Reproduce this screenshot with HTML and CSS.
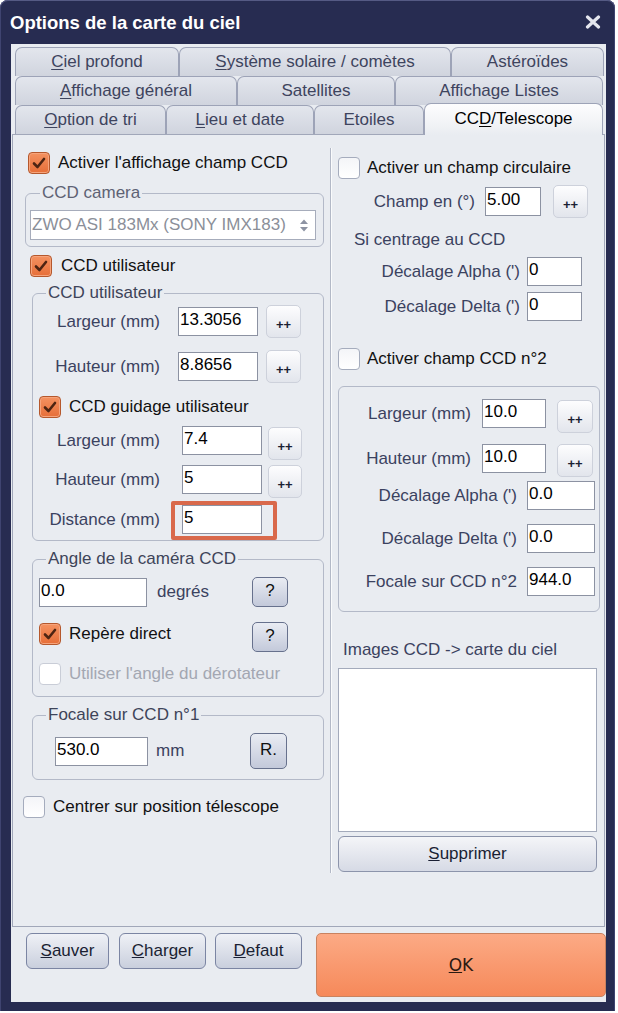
FILE: index.html
```html
<!DOCTYPE html>
<html lang="fr">
<head>
<meta charset="utf-8">
<title>Options de la carte du ciel</title>
<link rel="stylesheet" href="styles.css">
</head>
<body>
<div class="window">
  <div class="titlebar">
    <span class="title">Options de la carte du ciel</span>
    <svg class="close" width="16" height="14" viewBox="0 0 16 14"><path d="M2.5 2 L13.5 12 M13.5 2 L2.5 12"/></svg>
  </div>
  <div class="client">
    <div class="tabs">
      <div class="tabrow">
        <div class="tab t-ciel"><u>C</u>iel profond</div>
        <div class="tab t-sys"><u>S</u>ystème solaire / comètes</div>
        <div class="tab t-ast">Astéroïdes</div>
      </div>
      <div class="tabrow">
        <div class="tab t-aff"><u>A</u>ffichage général</div>
        <div class="tab t-sat">Satellites</div>
        <div class="tab t-list">Affichage Listes</div>
      </div>
      <div class="tabrow">
        <div class="tab t-tri"><u>O</u>ption de tri</div>
        <div class="tab t-lieu"><u>L</u>ieu et date</div>
        <div class="tab t-eto">Etoiles</div>
        <div class="tab t-ccd active">CC<u>D</u>/Telescope</div>
      </div>
    </div>

    <div class="panel">
      <div class="col-left">
        <div class="check-row cb-main">
          <span class="cb on"><svg viewBox="0 0 22 22" width="22" height="22"><path d="M6 11.5 L9.5 15 L16 7"/></svg></span>
          <span>Activer l'affichage champ CCD</span>
        </div>

        <fieldset class="grp g-cam">
          <legend class="lg-gray">CCD camera</legend>
          <div class="gbody b-cam">
            <div class="select">
              <span class="select-text">ZWO ASI 183Mx (SONY IMX183)</span>
              <span class="spin"><svg width="20" height="28" viewBox="0 0 20 28"><path d="M6 13 L10 8.5 L14 13 Z M6 16 L10 20.5 L14 16 Z"/></svg></span>
            </div>
          </div>
        </fieldset>

        <div class="check-row cb-user">
          <span class="cb on"><svg viewBox="0 0 22 22" width="22" height="22"><path d="M6 11.5 L9.5 15 L16 7"/></svg></span>
          <span>CCD utilisateur</span>
        </div>

        <fieldset class="grp g-user">
          <legend>CCD utilisateur</legend>
          <div class="gbody b-user">
            <div class="frow r-u">
              <span class="lbl lw127">Largeur (mm)</span>
              <input class="fld w80 ml18" type="text" value="13.3056">
              <button class="btn pp ml8 w35">++</button>
            </div>
            <div class="frow r-u mt12">
              <span class="lbl lw127">Hauteur (mm)</span>
              <input class="fld w80 ml18" type="text" value="8.8656">
              <button class="btn pp ml8 w35">++</button>
            </div>
            <div class="check-row cb-guid">
              <span class="cb on"><svg viewBox="0 0 22 22" width="22" height="22"><path d="M6 11.5 L9.5 15 L16 7"/></svg></span>
              <span>CCD guidage utilisateur</span>
            </div>
            <div class="frow r-g r-g1">
              <span class="lbl lw127">Largeur (mm)</span>
              <input class="fld w80 ml22" type="text" value="7.4">
              <button class="btn pp ml6 w34 mt1">++</button>
            </div>
            <div class="frow r-g r-g2">
              <span class="lbl lw127">Hauteur (mm)</span>
              <input class="fld w80 ml22" type="text" value="5">
              <button class="btn pp ml6 w34">++</button>
            </div>
            <div class="frow r-g r-g3">
              <span class="lbl lw127 mt4">Distance (mm)</span>
              <span class="hl"><input class="fld w80" type="text" value="5"></span>
            </div>
          </div>
        </fieldset>

        <fieldset class="grp g-angle">
          <legend>Angle de la caméra CCD</legend>
          <div class="gbody b-angle">
            <div class="frow r-a1">
              <input class="fld w108" type="text" value="0.0">
              <span class="lbl ml10">degrés</span>
              <button class="btn help">?</button>
            </div>
            <div class="frow r-a2">
              <span class="cb on mt1"><svg viewBox="0 0 22 22" width="22" height="22"><path d="M6 11.5 L9.5 15 L16 7"/></svg></span>
              <span class="cbtext">Repère direct</span>
              <button class="btn help">?</button>
            </div>
            <div class="check-row r-a3 disabled">
              <span class="cb"></span>
              <span>Utiliser l'angle du dérotateur</span>
            </div>
          </div>
        </fieldset>

        <fieldset class="grp g-focal">
          <legend>Focale sur CCD n°1</legend>
          <div class="gbody b-focal">
            <div class="frow r-f">
              <input class="fld w93" type="text" value="530.0">
              <span class="lbl ml8">mm</span>
              <button class="btn help r-btn">R.</button>
            </div>
          </div>
        </fieldset>

        <div class="check-row cb-centre">
          <span class="cb"></span>
          <span>Centrer sur position télescope</span>
        </div>
      </div>

      <div class="divider"></div>

      <div class="col-right">
        <div class="check-row cb-circ">
          <span class="cb"></span>
          <span>Activer un champ circulaire</span>
        </div>
        <div class="frow r-champ">
          <span class="lbl lw143">Champ en (°)</span>
          <input class="fld w56 ml10" type="text" value="5.00">
          <button class="btn pp ml12 w35">++</button>
        </div>
        <div class="note n-centr">Si centrage au CCD</div>
        <div class="frow r-off r-off1">
          <span class="lbl lw188">Décalage Alpha (')</span>
          <input class="fld w55 ml7" type="text" value="0">
        </div>
        <div class="frow r-off r-off2">
          <span class="lbl lw188">Décalage Delta (')</span>
          <input class="fld w55 ml7" type="text" value="0">
        </div>
        <div class="check-row cb-ccd2">
          <span class="cb"></span>
          <span>Activer champ CCD n°2</span>
        </div>
        <fieldset class="grp g-ccd2">
          <div class="gbody b-ccd2">
            <div class="frow r-c1">
              <span class="lbl lw132">Largeur (mm)</span>
              <input class="fld w64 ml11" type="text" value="10.0">
              <button class="btn pp ml11 w36 mt1">++</button>
            </div>
            <div class="frow r-c2">
              <span class="lbl lw132">Hauteur (mm)</span>
              <input class="fld w64 ml11" type="text" value="10.0">
              <button class="btn pp ml11 w36">++</button>
            </div>
            <div class="frow r-c3">
              <span class="lbl lw178">Décalage Alpha (')</span>
              <input class="fld w68 ml10" type="text" value="0.0">
            </div>
            <div class="frow r-c4">
              <span class="lbl lw178">Décalage Delta (')</span>
              <input class="fld w68 ml10" type="text" value="0.0">
            </div>
            <div class="frow r-c4">
              <span class="lbl lw178">Focale sur CCD n°2</span>
              <input class="fld w68 ml10" type="text" value="944.0">
            </div>
          </div>
        </fieldset>
        <div class="note n-img">Images CCD -&gt; carte du ciel</div>
        <div class="listbox"></div>
        <button class="btn supp"><u>S</u>upprimer</button>
      </div>
    </div>

    <div class="footer">
      <button class="btn fbtn f-sauv"><u>S</u>auver</button>
      <button class="btn fbtn f-charg"><u>C</u>harger</button>
      <button class="btn fbtn f-def"><u>D</u>efaut</button>
      <button class="btn ok"><u>O</u>K</button>
    </div>
  </div>
</div>
</body>
</html>
```

FILE: styles.css
```css
* { box-sizing: border-box; }
html, body { margin: 0; padding: 0; background: #ffffff; }
body {
  font-family: "Liberation Sans", Arial, sans-serif;
  font-size: 17px;
  line-height: 20px;
  color: #111111;
}

.window {
  width: 615px;
  height: 1011px;
  background: #272c51;
  border-radius: 8px 8px 0 0;
  display: flex;
  flex-direction: column;
  box-shadow: inset 0 1px 0 #555a84, inset 1px 0 0 #3f4470, inset -1px 0 0 #3f4470;
}

.titlebar {
  height: 44px;
  flex: none;
  display: flex;
  align-items: center;
  justify-content: space-between;
  padding: 0 14px 0 10px;
}
.title {
  color: #ffffff;
  font-weight: bold;
  font-size: 18.5px;
  line-height: 22px;
  margin-top: 1px;
}
.close path {
  stroke: #e4e6ee;
  stroke-width: 3.2;
  stroke-linecap: round;
  fill: none;
}

.client {
  flex: 1;
  margin: 0 9px 9px 11px;
  background: #e9ecf1;
  display: flex;
  flex-direction: column;
}

/* Tabs */
.tabs { padding: 3px 0 0 4px; }
.tabrow { display: flex; height: 29px; }
.tab {
  flex: none;
  height: 29px;
  border: 1px solid #9da3b7;
  border-bottom: none;
  border-radius: 7px 7px 0 0;
  background: linear-gradient(#e3e6ed, #d0d4de);
  color: #3e445e;
  text-align: center;
  line-height: 28px;
}
.tab u { text-decoration-thickness: 1px; text-underline-offset: 2px; }
.t-ciel { width: 164px; }
.t-sys { width: 272px; }
.t-ast { width: 153px; }
.t-aff { width: 222px; }
.t-sat { width: 158px; }
.t-list { width: 208px; }
.t-tri { width: 151px; }
.t-lieu { width: 148px; }
.t-eto { width: 110px; }
.t-ccd { width: 179px; }
.tab.active {
  position: relative;
  z-index: 1;
  height: 32px;
  margin-top: -2px;
  background: linear-gradient(#fdfdfe, #f0f2f5 70%, #e9ecf1);
  color: #000000;
  line-height: 30px;
}

/* Panel */
.panel {
  margin: 0 1px;
  height: 793px;
  border: 1px solid #a1a7b9;
  display: flex;
  align-items: flex-start;
}
.col-left {
  width: 317px;
  flex: none;
  display: flex;
  flex-direction: column;
  align-items: flex-start;
}
.divider {
  flex: none;
  width: 2px;
  height: 725px;
  margin-top: 13px;
  border-left: 1px solid #b3b9c7;
  border-right: 1px solid #fafbfc;
}
.col-right {
  width: 272px;
  flex: none;
  display: flex;
  flex-direction: column;
  align-items: flex-start;
}

/* Checkboxes */
.check-row { display: flex; align-items: center; height: 22px; gap: 8px; }
.cb {
  flex: none;
  width: 22px;
  height: 22px;
  border: 1px solid #a5acbd;
  border-radius: 4px;
  background: linear-gradient(#f4f5f8, #ffffff);
  display: block;
}
.cb.on {
  border-color: #b5582d;
  background: linear-gradient(#f49261, #e66e38);
  box-shadow: inset 0 0 0 1px #f6a47c;
}
.cb svg { display: block; margin: -1px; }
.cb path {
  fill: none;
  stroke: #4d2412;
  stroke-width: 2.6;
  stroke-linecap: round;
  stroke-linejoin: round;
}
.disabled { color: #a3a7b2; }
.disabled .cb { border-color: #c9cdd7; background: #ffffff; }

/* Groups */
.grp {
  margin: 0;
  padding: 0;
  min-width: 0;
  border: 1px solid #b3b9c8;
  border-radius: 6px;
}
.grp legend {
  margin-left: 13px;
  padding: 0 2px;
  line-height: 20px;
  color: #3e4459;
}
.grp legend.lg-gray { margin-left: 14px; color: #5e6274; }

/* Fields */
.frow { display: flex; align-items: center; }
.lbl {
  flex: none;
  color: #3b4260;
  white-space: nowrap;
}
.lbl[class*="lw"] { text-align: right; height: 29px; line-height: 29px; }
.fld {
  flex: none;
  height: 29px;
  margin: 0;
  border: 1px solid #8c92a2;
  background: #ffffff;
  font: inherit;
  color: #000000;
  padding: 0 2px 3px 1px;
  outline: none;
}
.btn {
  flex: none;
  margin: 0;
  font: inherit;
  color: #111111;
  padding: 0;
}
.pp {
  height: 33px;
  border: 1px solid #cdd1db;
  border-radius: 5px;
  background: linear-gradient(#fdfdfe, #e2e5ec);
  font-weight: bold;
  font-size: 13px;
  padding-top: 6px;
  color: #1a1f33;
}
.help {
  margin-left: auto;
  width: 36px;
  height: 30px;
  border: 1px solid #67718d;
  border-radius: 5px;
  background: linear-gradient(#e9ecf3, #c3c9da);
  line-height: 26px;
  padding-bottom: 2px;
}
.r-btn { width: 37px; height: 36px; }

.w34 { width: 34px; }
.w35 { width: 35px; }
.w36 { width: 36px; }
.w55 { width: 55px; }
.w56 { width: 56px; }
.w64 { width: 64px; }
.w68 { width: 68px; }
.w80 { width: 80px; }
.w93 { width: 93px; }
.w108 { width: 108px; }
.lw127 { width: 127px; }
.lw132 { width: 132px; }
.lw143 { width: 143px; }
.lw178 { width: 178px; }
.lw188 { width: 188px; }
.ml6 { margin-left: 6px; }
.ml7 { margin-left: 7px; }
.ml8 { margin-left: 8px; }
.ml10 { margin-left: 10px; }
.ml11 { margin-left: 11px; }
.ml12 { margin-left: 12px; }
.ml18 { margin-left: 18px; }
.ml22 { margin-left: 22px; }
.mt1 { margin-top: 1px; }
.mt4 { margin-top: 4px; }
.mt12 { margin-top: 12px; }

/* Left column placement */
.cb-main { margin: 17px 0 0 15px; }
.g-cam { margin: 9px 0 0 12px; width: 299px; }
.b-cam { padding: 7px 8px 6px 4px; }
.select {
  display: flex;
  width: 286px;
  height: 30px;
  border: 1px solid #a6acbb;
  background: #ffffff;
}
.select-text {
  flex: 1;
  overflow: hidden;
  white-space: nowrap;
  color: #8b8f99;
  line-height: 28px;
  padding-left: 1px;
}
.spin { flex: none; width: 22px; display: flex; align-items: center; justify-content: center; }
.spin svg { display: block; }
.spin path { fill: #8d93a3; }

.cb-user { margin: 8px 0 0 17px; gap: 9px; }
.g-user { margin: 6px 0 0 19px; width: 292px; }
.b-user { padding: 2px 0 0 0; }
.r-u { height: 33px; }
.cb-guid { margin: 13px 0 0 6px; }
.r-g { align-items: flex-start; }
.r-g1 { margin-top: 8px; height: 34px; }
.r-g2 { margin-top: 5px; height: 33px; }
.r-g3 { margin-top: 3px; }
.hl {
  flex: none;
  display: flex;
  margin-left: 11px;
  border: 4px solid #d9694b;
  border-radius: 2px;
  padding: 0 11px 2px 7px;
}

.g-angle { margin: 8px 0 0 19px; width: 292px; }
.b-angle { padding: 8px 35px 11px 6px; }
.r-a1 { height: 30px; }
.r-a2 { margin-top: 15px; height: 30px; align-items: flex-start; }
.cbtext { margin-left: 8px; margin-top: 1px; line-height: 22px; }
.r-a3 { margin-top: 11px; }

.g-focal { margin: 8px 0 0 19px; width: 292px; }
.b-focal { padding: 8px 36px 10px 22px; }
.r-f { height: 36px; }

.cb-centre { margin: 16px 0 0 10px; }

/* Right column placement */
.cb-circ { margin: 22px 0 0 6px; gap: 7px; }
.r-champ { margin-top: 6px; height: 33px; }
.note { color: #3b4260; line-height: 20px; }
.n-centr { margin-top: 12px; padding-left: 22px; }
.r-off1 { margin-top: 7px; }
.r-off2 { margin-top: 6px; }
.cb-ccd2 { margin: 27px 0 0 6px; gap: 7px; }
.g-ccd2 { margin: 16px 0 0 6px; width: 262px; }
.b-ccd2 { padding: 12px 0 15px 0; }
.r-c1 { height: 34px; align-items: flex-start; }
.r-c2 { margin-top: 11px; height: 33px; align-items: flex-start; }
.r-c3 { margin-top: 4px; }
.r-c4 { margin-top: 14px; }
.n-img { margin-top: 28px; padding-left: 11px; }
.listbox {
  margin: 8px 0 0 6px;
  width: 259px;
  height: 164px;
  background: #ffffff;
  border: 1px solid #a3aabb;
}
.supp {
  margin: 4px 0 0 6px;
  width: 259px;
  height: 36px;
  border: 1px solid #8c94ab;
  border-radius: 6px;
  background: linear-gradient(#f4f5f8, #d6dae5);
  color: #1a1f33;
}

/* Footer */
.footer {
  display: flex;
  align-items: flex-start;
  padding: 6px 0 0 15px;
}
.fbtn {
  height: 36px;
  border: 1px solid #7b85a3;
  border-radius: 6px;
  background: linear-gradient(#eff1f6, #c9cfdd);
  color: #1a1f33;
}
.f-sauv { width: 83px; }
.f-charg { width: 87px; margin-left: 10px; }
.f-def { width: 87px; margin-left: 9px; }
.ok {
  width: 290px;
  height: 64px;
  margin-left: 14px;
  border: 1px solid #c9825f;
  border-radius: 5px;
  background: linear-gradient(#fcaa85, #f6895a);
  font-family: "DejaVu Sans", "Liberation Sans", sans-serif;
  font-size: 17px;
  color: #2b1a12;
}
```
